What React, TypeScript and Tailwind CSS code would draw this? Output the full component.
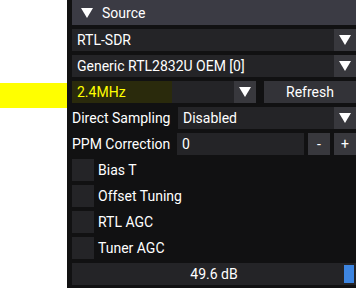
import React from "react";

const Arrow = () => (
  <svg width="12" height="10" viewBox="0 0 12 10">
    <polygon points="0,0 12,0 6,10" fill="#ffffff" />
  </svg>
);

const Combo = ({ text, className = "" }: { text: string; className?: string }) => (
  <div className={`flex h-[22px] bg-[#242427] ${className}`}>
    <div className="flex flex-1 items-center pl-[5px] text-white">{text}</div>
    <div className="flex w-[22px] items-center justify-center bg-[#38383d]">
      <Arrow />
    </div>
  </div>
);

const Check = ({ label }: { label: string }) => (
  <div className="flex h-[22px] items-center gap-[4px]">
    <div className="h-[22px] w-[22px] bg-[#242427]" />
    <span className="text-white">{label}</span>
  </div>
);

export default function App() {
  return (
    <div
      className="flex h-[288px] w-[356px] overflow-hidden bg-white text-[14px] leading-none"
      style={{ fontFamily: "Roboto, 'Liberation Sans', sans-serif" }}
    >
      <div className="w-[67px] shrink-0">
        <div className="mt-[83px] h-[25px] bg-[#ffff00]" />
      </div>
      <div className="flex flex-1 flex-col gap-[4px] bg-[#111112] pl-[5px]">
        <div className="flex h-[25px] items-center bg-[#3b3b44] pl-[9px] text-white">
          <Arrow />
          <span className="ml-[9px]">Source</span>
        </div>
        <Combo text="RTL-SDR" />
        <Combo text="Generic RTL2832U OEM [0]" />
        <div className="flex h-[22px] gap-[8px]">
          <div className="flex w-[184px] bg-[#242427]">
            <div className="flex w-[100px] items-center bg-[#2a2a0c] pl-[5px] text-[#ffff00]">2.4MHz</div>
            <div className="flex-1" />
            <div className="flex w-[22px] items-center justify-center bg-[#38383d]">
              <Arrow />
            </div>
          </div>
          <div className="flex flex-1 items-center justify-center bg-[#333338] text-white">Refresh</div>
        </div>
        <div className="flex h-[22px] items-center">
          <span className="w-[106px] text-white">Direct Sampling</span>
          <Combo text="Disabled" className="flex-1" />
        </div>
        <div className="flex h-[22px] items-center">
          <span className="w-[105px] text-white">PPM Correction</span>
          <div className="flex h-[22px] flex-1 gap-[4px]">
            <div className="flex flex-1 items-center bg-[#242427] pl-[5px] text-white">0</div>
            <div className="flex w-[22px] items-center justify-center bg-[#38383d] text-white">-</div>
            <div className="flex w-[22px] items-center justify-center bg-[#38383d] text-white">+</div>
          </div>
        </div>
        <Check label="Bias T" />
        <Check label="Offset Tuning" />
        <Check label="RTL AGC" />
        <Check label="Tuner AGC" />
        <div className="relative flex h-[22px] items-center justify-center bg-[#242427] text-white">
          <span>49.6 dB</span>
          <div className="absolute right-[2px] top-[2px] h-[18px] w-[10px] bg-[#3d85e0]" />
        </div>
      </div>
    </div>
  );
}
